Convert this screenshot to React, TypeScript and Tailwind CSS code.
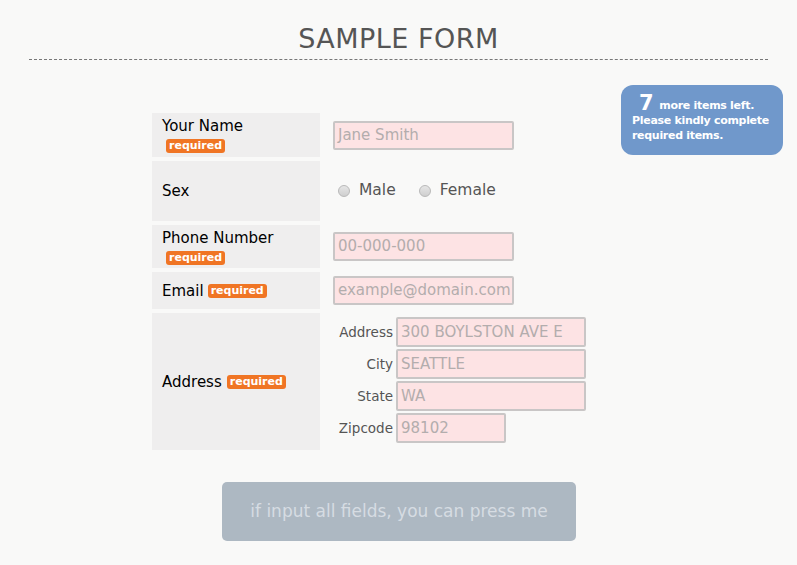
import React from 'react';

const Required = () => (
  <span className="inline-block rounded-[3px] bg-[#f07524] px-[3px] py-[1px] text-[11px] font-bold leading-[12px] text-white">
    required
  </span>
);

const Field = ({ value, w = 'w-[181px]', h = 'h-[29px]' }: { value: string; w?: string; h?: string }) => (
  <div
    className={`${w} ${h} flex items-center overflow-hidden whitespace-nowrap rounded-[2px] border-2 border-[#c9c6c6] bg-[#fde3e4] px-[3px] text-[15px] text-[#b3adad]`}
  >
    {value}
  </div>
);

const Label = ({ children, h }: { children: React.ReactNode; h: string }) => (
  <div className={`${h} flex flex-col justify-center bg-[#efeeee] px-[10px] text-[15px] leading-[18px] text-black`}>
    {children}
  </div>
);

const Radio = ({ label }: { label: string }) => (
  <label className="flex items-center gap-[9px]">
    <span className="h-[12px] w-[12px] rounded-full border border-[#b9b9b9] bg-gradient-to-b from-[#e6e6e6] to-[#cfcfcf]" />
    <span>{label}</span>
  </label>
);

const SubRow = ({ label, value, w }: { label: string; value: string; w?: string }) => (
  <div className="flex items-center gap-[3px]">
    <div className="w-[60px] text-right text-[13.5px] text-[#555]">{label}</div>
    <Field value={value} w={w ?? 'w-[190px]'} h="h-[30px]" />
  </div>
);

export default function App() {
  return (
    <div className="relative min-h-[565px] w-[797px] bg-[#f9f9f8] font-['DejaVu_Sans',sans-serif]">
      <div className="pt-[22px] text-center text-[27px] leading-[34px] tracking-[0.5px] text-[#555]">SAMPLE FORM</div>
      <div className="mx-[29px] mt-[3px] border-b border-dashed border-[#777]" />

      <div className="absolute left-[621px] top-[85px] h-[70px] w-[162px] whitespace-nowrap rounded-[12px] bg-[#7098cb] pl-[11px] pt-[8px] text-[11px] font-bold leading-[15px] tracking-[-0.3px] text-white">
        <div className="flex items-end gap-[6px] pl-[7px]">
          <span className="text-[21px] leading-[20px]">7</span>
          <span>more items left.</span>
        </div>
        <div>Please kindly complete</div>
        <div>required items.</div>
      </div>

      <div className="ml-[152px] mt-[53px] grid grid-cols-[168px_auto] gap-x-[3px] gap-y-[4px]">
        <Label h="h-[44px]">
          <div>Your Name</div>
          <div className="pl-[4px]"><Required /></div>
        </Label>
        <div className="flex items-center pl-[10px]">
          <Field value="Jane Smith" />
        </div>

        <Label h="h-[60px]">
          <div>Sex</div>
        </Label>
        <div className="flex items-center gap-[23px] pl-[15px] text-[15.5px] text-[#555]">
          <Radio label="Male" />
          <Radio label="Female" />
        </div>

        <Label h="h-[43px]">
          <div>Phone Number</div>
          <div className="pl-[4px]"><Required /></div>
        </Label>
        <div className="flex items-center pl-[10px]">
          <Field value="00-000-000" />
        </div>

        <Label h="h-[37px]">
          <div className="flex items-center gap-[4px]">
            <span>Email</span>
            <Required />
          </div>
        </Label>
        <div className="flex items-center pl-[10px]">
          <Field value="example@domain.com" />
        </div>

        <Label h="h-[137px]">
          <div className="flex items-center gap-[5px]">
            <span>Address</span>
            <Required />
          </div>
        </Label>
        <div className="flex flex-col justify-center gap-[2px] pb-[3px] pl-[10px]">
          <SubRow label="Address" value="300 BOYLSTON AVE E" />
          <SubRow label="City" value="SEATTLE" />
          <SubRow label="State" value="WA" />
          <SubRow label="Zipcode" value="98102" w="w-[110px]" />
        </div>
      </div>

      <div className="ml-[222px] mt-[32px] flex h-[59px] w-[354px] items-center justify-center rounded-[5px] bg-[#adb8c2] text-[17px] text-[#d6dce2]">
        if input all fields, you can press me
      </div>
    </div>
  );
}
